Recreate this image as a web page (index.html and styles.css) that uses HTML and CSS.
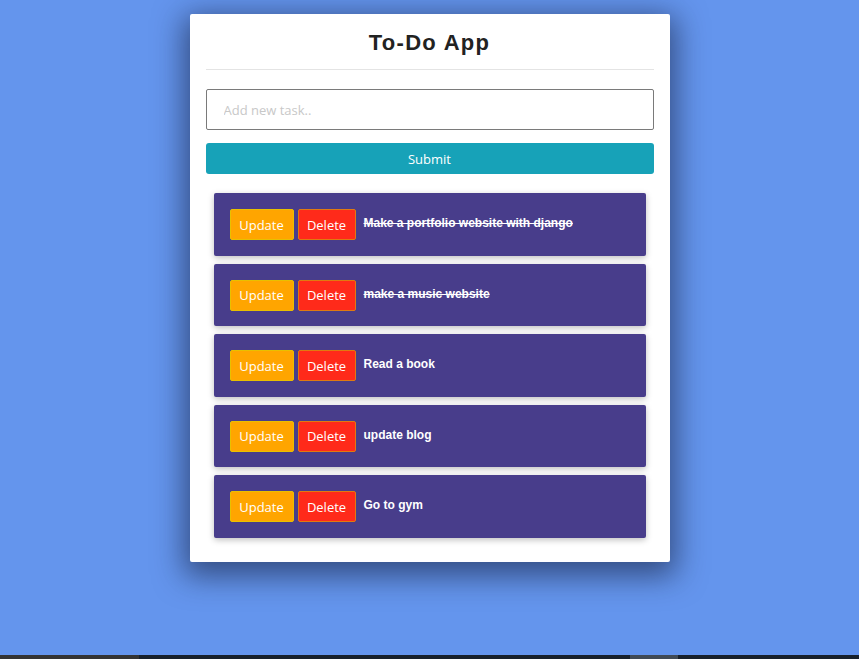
FILE: index.html
```html
<!DOCTYPE html>
<html>
<head>
<meta charset="utf-8">
<title>To-Do App</title>
<link rel="stylesheet" href="styles.css">
</head>
<body>
<div class="page">
  <div class="card">
    <h1 class="title">To-Do App</h1>
    <hr class="rule">
    <form class="form">
      <input class="task-input" type="text" placeholder="Add new task..">
      <button class="submit" type="button">Submit</button>
    </form>
    <div class="tasks">
      <div class="task">
        <button class="btn btn-update" type="button">Update</button>
        <button class="btn btn-delete" type="button">Delete</button>
        <span class="task-text done">Make a portfolio website with django</span>
      </div>
      <div class="task">
        <button class="btn btn-update" type="button">Update</button>
        <button class="btn btn-delete" type="button">Delete</button>
        <span class="task-text done">make a music website</span>
      </div>
      <div class="task">
        <button class="btn btn-update" type="button">Update</button>
        <button class="btn btn-delete" type="button">Delete</button>
        <span class="task-text">Read a book</span>
      </div>
      <div class="task">
        <button class="btn btn-update" type="button">Update</button>
        <button class="btn btn-delete" type="button">Delete</button>
        <span class="task-text">update blog</span>
      </div>
      <div class="task">
        <button class="btn btn-update" type="button">Update</button>
        <button class="btn btn-delete" type="button">Delete</button>
        <span class="task-text">Go to gym</span>
      </div>
    </div>
  </div>
</div>
<div class="taskbar">
  <div class="tb-left"></div>
  <div class="tb-mid"></div>
  <div class="tb-btn"></div>
  <div class="tb-rest"></div>
</div>
</body>
</html>
```

FILE: styles.css
```css
* { box-sizing: border-box; }
html, body {
  margin: 0;
  padding: 0;
  height: 100%;
}
body {
  background: #6495ed;
  font-family: "Open Sans", "Noto Sans", sans-serif;
  overflow: hidden;
}
.page {
  display: flex;
  justify-content: center;
  padding-top: 14px;
}
.card {
  width: 480px;
  background: #fff;
  border-radius: 2px;
  padding: 16px 16px 24px;
  box-shadow: 0 8px 30px 6px rgba(20, 30, 60, 0.6);
}
.title {
  margin: 0;
  text-align: center;
  font-family: "Liberation Sans", Arial, sans-serif;
  font-weight: bold;
  font-size: 22px;
  letter-spacing: 1.3px;
  line-height: 26px;
  color: #222;
}
.rule {
  margin: 13px 0 0;
  border: 0;
  border-top: 1px solid #e4e4e4;
}
.form {
  margin-top: 19px;
  display: flex;
  flex-direction: column;
  gap: 13px;
}
.task-input {
  height: 41px;
  border: 1px solid #7a7a7a;
  border-radius: 2px;
  padding: 0 17px;
  font-family: "Open Sans", sans-serif;
  font-size: 13px;
  color: #333;
}
.task-input::placeholder { color: #c8c8c8; }
.submit {
  height: 31px;
  border: 0;
  border-radius: 3px;
  background: #17a2b8;
  color: #fff;
  font-family: "Open Sans", sans-serif;
  font-size: 13px;
}
.tasks {
  margin-top: 19px;
  padding: 0 8px;
  display: flex;
  flex-direction: column;
  gap: 8px;
}
.task {
  height: 62.5px;
  background: #483d8b;
  border-radius: 2px;
  box-shadow: 0 2px 6px rgba(0, 0, 0, 0.25);
  display: flex;
  align-items: flex-start;
  padding: 16px 16px;
  gap: 4px;
}
.btn {
  height: 31px;
  border-radius: 2px;
  color: #fff;
  font-family: "Open Sans", sans-serif;
  font-size: 13px;
  padding: 0;
}
.btn-update {
  width: 64px;
  background: #ffa500;
  border: 1px solid #e8c000;
}
.btn-delete {
  width: 58px;
  background: #ff2a1a;
  border: 1px solid #e07a10;
}
.task-text {
  margin-left: 4px;
  margin-top: 7px;
  font-family: "Liberation Sans", Arial, sans-serif;
  font-weight: bold;
  font-size: 12px;
  color: #fff;
}
.done { text-decoration: line-through; }
.taskbar {
  position: fixed;
  left: 0;
  right: 0;
  bottom: 0;
  height: 4px;
  display: flex;
}
.tb-left { width: 139px; background: #333; }
.tb-mid { width: 491px; background: #17202b; }
.tb-btn { width: 48px; background: #404a55; }
.tb-rest { flex: 1; background: #17202b; }
```
